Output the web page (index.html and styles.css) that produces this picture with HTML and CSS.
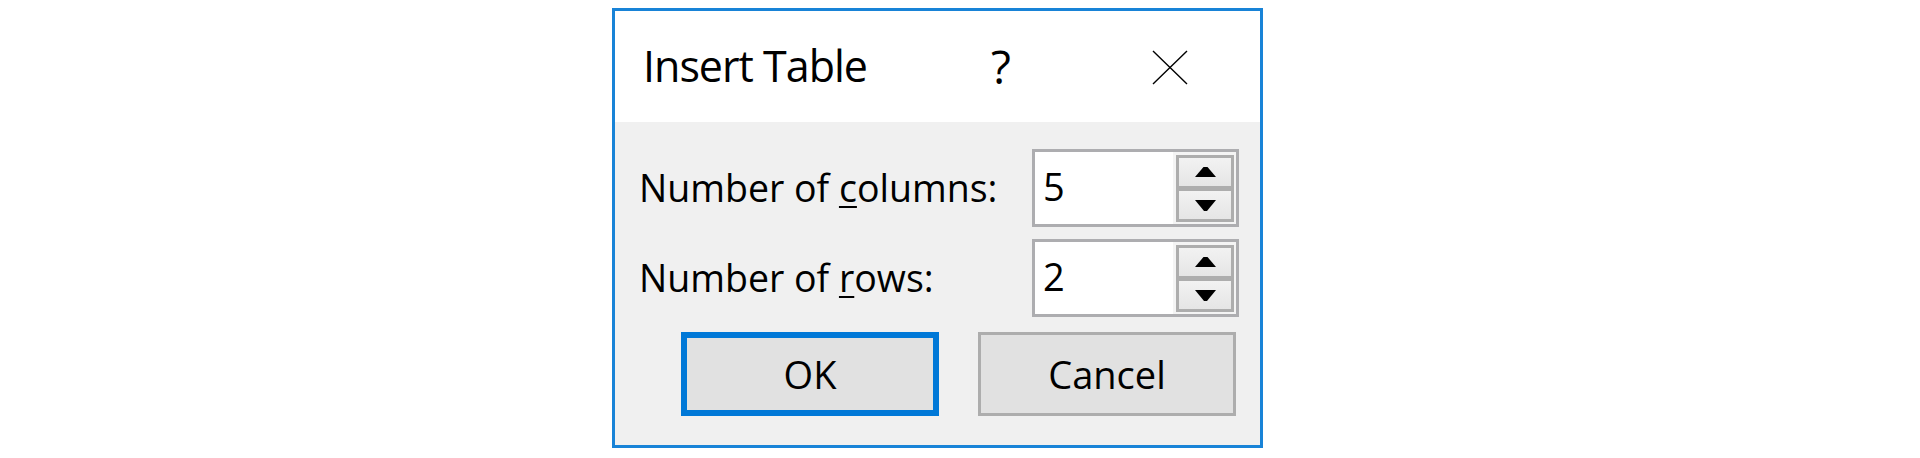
FILE: index.html
```html
<!DOCTYPE html>
<html lang="en">
<head>
<meta charset="utf-8">
<title>Insert Table</title>
<link rel="stylesheet" href="styles.css">
</head>
<body>
<div class="dialog">
  <div class="titlebar">
    <span class="title">Insert Table</span>
    <span class="help">?</span>
    <svg class="close" width="36" height="35" viewBox="0 0 36 35" aria-label="Close">
      <path d="M1 1 L35 34 M35 1 L1 34" stroke="#000" stroke-width="1.4" fill="none"/>
    </svg>
  </div>
  <div class="content">
    <div class="field">
      <span class="label">Number of <u>c</u>olumns:</span>
      <div class="spinbox">
        <span class="spin-value">5</span>
        <div class="spin-col">
          <div class="spin-group">
            <div class="spin-btn"><svg width="21" height="10" viewBox="0 0 21 10"><polygon points="8.5,0 12.5,0 21,10 0,10" fill="#000"/></svg></div>
            <div class="spin-btn"><svg width="21" height="11" viewBox="0 0 21 11"><polygon points="0,0 21,0 12,11 9,11" fill="#000"/></svg></div>
          </div>
        </div>
      </div>
    </div>
    <div class="field">
      <span class="label">Number of <u>r</u>ows:</span>
      <div class="spinbox">
        <span class="spin-value">2</span>
        <div class="spin-col">
          <div class="spin-group">
            <div class="spin-btn"><svg width="21" height="10" viewBox="0 0 21 10"><polygon points="8.5,0 12.5,0 21,10 0,10" fill="#000"/></svg></div>
            <div class="spin-btn"><svg width="21" height="11" viewBox="0 0 21 11"><polygon points="0,0 21,0 12,11 9,11" fill="#000"/></svg></div>
          </div>
        </div>
      </div>
    </div>
    <div class="actions">
      <div class="btn default">OK</div>
      <div class="btn">Cancel</div>
    </div>
  </div>
</div>
</body>
</html>
```
FILE: styles.css
```css
body {
  margin: 0;
  background: #ffffff;
  font-family: "Open Sans", "Noto Sans", sans-serif;
  color: #000;
}

.dialog {
  box-sizing: border-box;
  width: 651px;
  height: 440px;
  margin: 8px 0 0 612px;
  border: 3px solid #1883d7;
  display: flex;
  flex-direction: column;
}

.titlebar {
  height: 111px;
  flex: none;
  background: #fff;
  display: flex;
  align-items: center;
  padding: 0 72px 2px 28px;
  box-sizing: border-box;
}

.title {
  flex: 1;
  font-size: 43px;
  letter-spacing: -1px;
  line-height: 1;
}

.help {
  font-size: 46px;
  line-height: 1;
  width: 22px;
  margin-right: 139px;
  font-weight: 400;
}

.close {
  display: block;
  margin-bottom: -4px;
}

.content {
  flex: 1;
  background: #f0f0f0;
  padding: 27px 0 0 24px;
}

.field {
  display: flex;
  align-items: center;
  height: 78px;
}

.field + .field {
  margin-top: 12px;
}

.label {
  width: 393px;
  font-size: 37.5px;
  line-height: 1;
}

.label u {
  text-decoration-thickness: 2px;
  text-underline-offset: 4px;
}

.spinbox {
  box-sizing: border-box;
  width: 207px;
  height: 78px;
  border: 3px solid #adadb0;
  background: #fff;
  display: flex;
}

.spin-value {
  flex: 1;
  font-size: 38px;
  line-height: 1;
  padding: 0 0 5px 8px;
  display: flex;
  align-items: center;
}

.spin-col {
  box-sizing: border-box;
  width: 63px;
  background: #f4f4f4;
  padding: 3px 2px 2px 3px;
}

.spin-group {
  box-sizing: border-box;
  height: 67px;
  border: 3px solid #adadad;
  background: #adadad;
  display: flex;
  flex-direction: column;
  gap: 5px;
}

.spin-btn {
  flex: 1;
  background: linear-gradient(#f2f2f2, #e5e5e5);
  display: flex;
  align-items: center;
  justify-content: center;
}

.spin-btn svg {
  display: block;
}

.actions {
  display: flex;
  gap: 39px;
  margin-top: 15px;
  padding-left: 42px;
}

.btn {
  box-sizing: border-box;
  width: 258px;
  height: 84px;
  background: #e1e1e1;
  border: 3px solid #adadad;
  font-size: 38px;
  line-height: 1;
  display: flex;
  align-items: center;
  justify-content: center;
}

.btn.default {
  border: 6px solid #0078d7;
}
```
